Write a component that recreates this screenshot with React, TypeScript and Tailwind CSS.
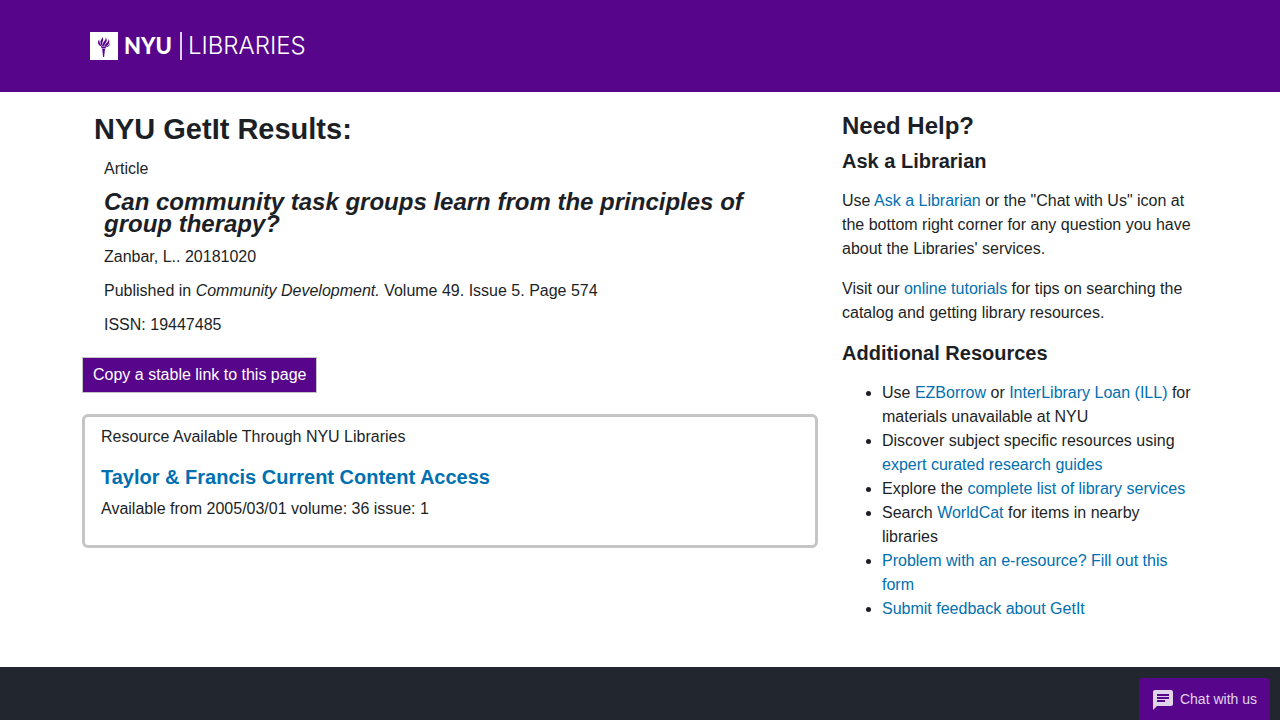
import type { ReactNode } from "react";

function Link({ children }: { children: ReactNode }) {
  return (
    <a href="#" className="text-[#0070b1] hover:underline">
      {children}
    </a>
  );
}

function TorchMark() {
  return (
    <svg viewBox="0 0 28 28" className="size-7 shrink-0" aria-hidden="true">
      <rect width="28" height="28" fill="#fff" />
      <g fill="#57068c">
        <path d="M11 14.800h5.200l-.7 1.600h-3.800z" />
        <path d="M12.200 17h2.800l-.9 8h-1z" />
        <path d="M11.800 14.800C9.300 13.800 7.700 12 8 9.900c.2-1 .6-1.700 1.300-2.300-.2 2.800.9 4.700 3.200 7.200z" />
        <path d="M12.500 14.500c-2.400-2.200-2.700-4.500-1.500-6.400.8-1.200 1.200-1.900 1-3.100 1.600 1.600 1.400 2.900.8 4.200-.7 1.500-.7 3 .5 5z" />
        <path d="M13.400 14.500c-1-2.400-.5-3.900.9-5.400 1.100-1.200 1.500-2.100 1.300-3.600 1.700 1.900 1.400 3.500.4 4.900-1.100 1.400-1.700 2.300-1.800 4z" />
        <path d="M14.500 14.700c.2-1.600 1.100-2.800 2.400-3.900 1.200-1.100 1.800-2.200 1.700-3.700 1.700 2.600.4 5.900-3.100 7.600z" />
        <path d="M15.900 14.900c1.700-1 3.200-2.200 3.900-3.900.2 1.900-.8 3.700-2.800 4z" />
      </g>
    </svg>
  );
}

function Header() {
  return (
    <header className="bg-[#57068c]">
      <div className="mx-auto flex h-[92px] max-w-[1140px] items-center px-5">
        <a href="#" aria-label="NYU Libraries" className="flex items-center text-white">
          <TorchMark />
          <span className="ml-1.5 font-[Lato,sans-serif] text-[22px] leading-7 font-black">NYU</span>
          <span className="mr-1.5 ml-2 h-7 w-0.5 bg-white/80" />
          <span className="font-[Inter,sans-serif] text-2xl leading-7 font-light">LIBRARIES</span>
        </a>
      </div>
    </header>
  );
}

function Results() {
  return (
    <section className="min-w-0 px-3 lg:w-2/3">
      <h1 className="px-3 text-[29px] leading-[34px] font-bold">NYU GetIt Results:</h1>
      <div className="mt-[11px] flex flex-col gap-2.5 px-[22px]">
        <p>Article</p>
        <h2 className="text-2xl leading-[22px] font-bold italic">
          Can community task groups learn from the principles of group therapy?
        </h2>
        <p>Zanbar, L.. 20181020</p>
        <p>
          Published in <i>Community Development.</i> Volume 49. Issue 5. Page 574
        </p>
        <p>ISSN: 19447485</p>
      </div>
      <button
        type="button"
        className="mt-5 block border border-[#c5c5c5] bg-[#57068c] px-2.5 py-[5px] text-white"
      >
        Copy a stable link to this page
      </button>
      <div className="mt-[21px] rounded-md border-3 border-[#c5c5c5] px-4 pt-2 pb-6">
        <p>Resource Available Through NYU Libraries</p>
        <h3 className="mt-4 text-xl leading-6 font-bold">
          <Link>Taylor &amp; Francis Current Content Access</Link>
        </h3>
        <p className="mt-2">Available from 2005/03/01 volume: 36 issue: 1</p>
      </div>
    </section>
  );
}

function Help() {
  return (
    <aside className="min-w-0 px-3 lg:w-1/3">
      <h2 className="text-2xl leading-7 font-bold">Need Help?</h2>
      <h3 className="mt-[9px] text-xl leading-6 font-bold">Ask a Librarian</h3>
      <p className="mt-4">
        Use <Link>Ask a Librarian</Link> or the "Chat with Us" icon at the bottom right corner for
        any question you have about the Libraries' services.
      </p>
      <p className="mt-4">
        Visit our <Link>online tutorials</Link> for tips on searching the catalog and getting
        library resources.
      </p>
      <h3 className="mt-4 text-xl leading-6 font-bold">Additional Resources</h3>
      <ul className="mt-4 list-disc pl-10">
        <li>
          Use <Link>EZBorrow</Link> or <Link>InterLibrary Loan (ILL)</Link> for materials
          unavailable at NYU
        </li>
        <li>
          Discover subject specific resources using <Link>expert curated research guides</Link>
        </li>
        <li>
          Explore the <Link>complete list of library services</Link>
        </li>
        <li>
          Search <Link>WorldCat</Link> for items in nearby libraries
        </li>
        <li>
          <Link>Problem with an e-resource? Fill out this form</Link>
        </li>
        <li>
          <Link>Submit feedback about GetIt</Link>
        </li>
      </ul>
    </aside>
  );
}

function ChatButton() {
  return (
    <button
      type="button"
      className="fixed right-2.5 bottom-0 flex h-[42px] items-center gap-[5px] rounded-t-[3px] bg-[#57068c] pr-[13px] pl-3 text-sm text-[#e1d4ea]"
    >
      <svg viewBox="0 -1 24 24" className="size-6" fill="currentColor" aria-hidden="true">
        <path d="M20 2H4c-1.100 0-1.990.9-1.990 2L2 22l4-4h14c1.100 0 2-.9 2-2V4c0-1.100-.9-2-2-2zM6 9h12v2H6V9zm8 5H6v-2h8v2zm4-6H6V6h12v2z" />
      </svg>
      Chat with us
    </button>
  );
}

export default function App() {
  return (
    <div className="flex min-h-screen flex-col bg-white font-['Liberation_Sans',Arial,sans-serif] text-base leading-6 text-[#1c1f26]">
      <Header />
      <main className="mx-auto flex w-full max-w-[1140px] flex-col pt-5 pb-[46px] lg:flex-row">
        <Results />
        <Help />
      </main>
      <footer className="grow bg-[#22262e]" />
      <ChatButton />
    </div>
  );
}
